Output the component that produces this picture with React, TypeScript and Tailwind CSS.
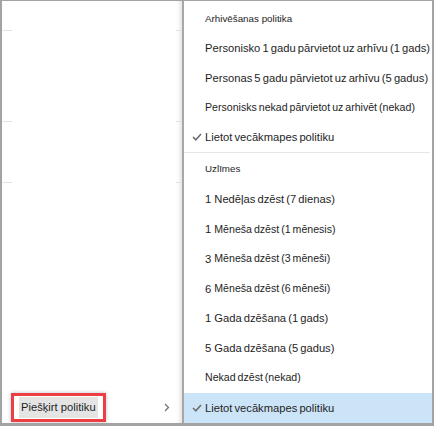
const font = { fontFamily: '"Segoe UI", "Liberation Sans", Arial, sans-serif' };

type Item = { lead?: string; text: string; small?: boolean; checked?: boolean; active?: boolean };

const archive: Item[] = [
  { text: "Personisko 1 gadu pārvietot uz arhīvu (1 gads)" },
  { text: "Personas 5 gadu pārvietot uz arhīvu (5 gadus)" },
  { text: "Personisks nekad pārvietot uz arhivēt (nekad)", small: true },
  { text: "Lietot vecākmapes politiku", checked: true },
];

const labels: Item[] = [
  { lead: "1", text: "Nedēļas dzēst (7 dienas)" },
  { lead: "1", text: "Mēneša dzēst (1 mēnesis)", small: true },
  { lead: "3", text: "Mēneša dzēst (3 mēneši)", small: true },
  { lead: "6", text: "Mēneša dzēst (6 mēneši)", small: true },
  { lead: "1", text: "Gada dzēšana (1 gads)" },
  { lead: "5", text: "Gada dzēšana (5 gadus)" },
  { text: "Nekad dzēst (nekad)", small: true },
  { text: "Lietot vecākmapes politiku", checked: true, active: true },
];

const Check = () => (
  <svg width="10" height="8" viewBox="0 0 10 8" className="absolute left-[8px]">
    <path d="M1 4 L3.8 6.8 L9 1" fill="none" stroke="#6b6b6b" strokeWidth="1.5" />
  </svg>
);

const Row = ({ item, h }: { item: Item; h: string }) => (
  <div
    className={`relative flex items-center pl-[21px] whitespace-nowrap text-[#1e1e1e] [word-spacing:-1px] ${h} ${
      item.active ? "bg-[#cce4f7]" : ""
    }`}
  >
    {item.checked && <Check />}
    {item.lead && <span className="text-[11.3px] mr-[3px]">{item.lead}</span>}
    <span className={item.small ? "text-[10.6px]" : "text-[11.2px]"}>{item.text}</span>
  </div>
);

const Tick = () => (
  <div className="flex justify-between h-px">
    <div className="w-[10px] bg-[#e3e3e3]" />
    <div className="w-[6px] bg-[#e3e3e3]" />
  </div>
);

export default function App() {
  return (
    <div
      style={font}
      className="w-[434px] h-[426px] flex bg-white border-t border-l-2 border-r-[2px] border-b-[3px] border-[#a3a3a3] overflow-hidden"
    >
      {/* left panel */}
      <div className="w-[180px] shrink-0 flex flex-col shadow-[inset_-5px_0_4px_-3px_rgba(0,0,0,0.12)]">
        <div className="h-[29px]" />
        <Tick />
        <div className="h-[90px]" />
        <Tick />
        <div className="h-[60px]" />
        <Tick />
        <div className="flex-1" />
        <div className="h-[30px] flex items-center mb-[1px]">
          <div className="ml-[9px] h-[29px] px-[5px] flex items-center border-[3px] border-[#ec3f45] shadow-[0_0_4px_rgba(0,0,0,0.25)]">
            <span className="bg-[#e4e4e4] px-[2px] py-[2px] text-[11.2px] text-[#1e1e1e] leading-[17px] whitespace-nowrap">
              Piešķirt politiku
            </span>
          </div>
          <div className="flex-1" />
          <svg width="6" height="9" viewBox="0 0 6 9" className="mr-[12px]">
            <path d="M1 1 L4.5 4.5 L1 8" fill="none" stroke="#6f6f6f" strokeWidth="1.2" />
          </svg>
        </div>
      </div>
      <div className="w-[2px] shrink-0 bg-[#a8a8a8]" />

      {/* right menu */}
      <div className="flex-1 min-w-0 flex flex-col">
        <div className="h-[3px]" />
        <div className="h-[30px] flex items-center pl-[21px] text-[9.8px] text-[#1e1e1e]">
          Arhivēšanas politika
        </div>
        {archive.map((it, i) => (
          <Row key={i} item={it} h="h-[29.5px]" />
        ))}
        <div className="h-px bg-[#e6e6e6] mr-[2px]" />
        <div className="h-[32px] flex items-center pl-[21px] text-[9.8px] text-[#1e1e1e]">Uzlīmes</div>
        {labels.map((it, i) => (
          <Row key={i} item={it} h="h-[29.75px]" />
        ))}
      </div>
    </div>
  );
}
